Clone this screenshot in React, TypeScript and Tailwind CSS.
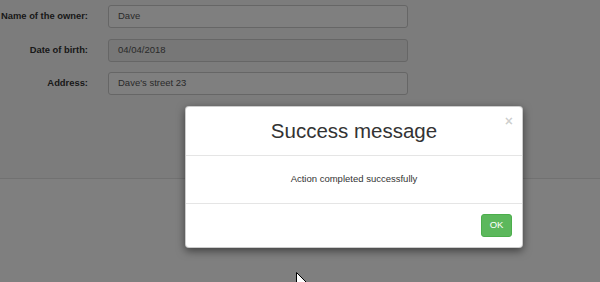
import React from "react";

const fields = [
    {label: "Name of the owner:", value: "Dave", disabled: false},
    {label: "Date of birth:", value: "04/04/2018", disabled: true},
    {label: "Address:", value: "Dave's street 23", disabled: false},
];

export default function App() {
    return (
        <div className="relative w-[600px] h-[282px] overflow-hidden bg-white font-['Liberation_Sans',Arial,sans-serif]">
            {/* page behind the backdrop */}
            <div className="h-[179px] bg-[#f9f9f9] border-b border-[#e3e3e3] pt-[5px]">
                <div className="flex flex-col gap-[10.5px]">
                    {fields.map((f) => (
                        <div key={f.label} className="flex items-center">
                            <div className="w-[88px] shrink-0 flex justify-end whitespace-nowrap">
                                <label className="text-[9.4px] font-bold text-[#333]">{f.label}</label>
                            </div>
                            <div
                                className={`ml-[20px] w-[300px] h-[23px] flex items-center px-[9px] rounded-[3px] border border-[#ccc] text-[9.5px] text-[#555] ${f.disabled ? "bg-[#eee]" : "bg-white"}`}>
                                {f.value}
                            </div>
                        </div>
                    ))}
                </div>
            </div>

            {/* backdrop */}
            <div className="absolute inset-0 bg-black/50"/>

            {/* modal */}
            <div className="absolute inset-0 pl-[185px] pt-[106px]">
                <div className="w-[338px] bg-white rounded-[4px] shadow-[0_3px_9px_rgba(0,0,0,0.5)] border border-black/20">
                    <div className="relative h-[49px] border-b border-[#e5e5e5] flex items-center justify-center">
                        <h3 className="text-[20.5px] text-[#333] font-normal">Success message</h3>
                        <span className="absolute right-[9px] top-[7px] text-[14px] font-bold leading-none text-black/20">×</span>
                    </div>
                    <div className="h-[47px] flex items-center justify-center text-[9.5px] text-[#333]">
                        Action completed successfully
                    </div>
                    <div className="border-t border-[#e5e5e5] flex justify-end p-[10px]">
                        <button className="w-[31px] h-[23px] rounded-[3px] bg-[#5cb85c] border border-[#4cae4c] text-white text-[9.5px]">OK</button>
                    </div>
                </div>
            </div>

            {/* mouse pointer */}
            <svg className="absolute left-[296px] top-[272px]" width="12" height="18" viewBox="0 0 12 18">
                <path d="M0.5 0.5 L0.5 14.5 L3.8 11.3 L6.3 16.8 L8.3 15.9 L5.9 10.5 L10.5 10.5 Z" fill="white" stroke="black"
                      strokeWidth="1"/>
            </svg>
        </div>
    );
}
